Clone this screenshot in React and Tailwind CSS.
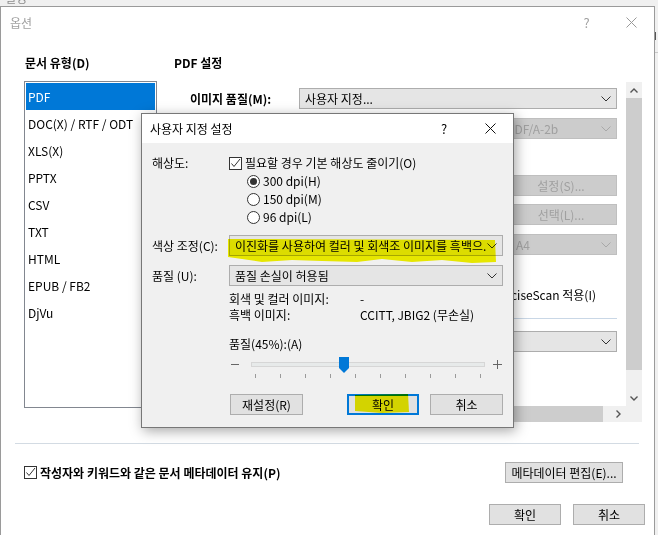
import React from 'react';

const font = "font-['Noto_Sans_CJK_KR','Noto_Sans',sans-serif]";

const Chevron = ({ color = '#333' }) => (
  <svg width="10" height="6" viewBox="0 0 10 6" fill="none" className="shrink-0">
    <path d="M0.5 0.5L5 5L9.5 0.5" stroke={color} strokeWidth="1" />
  </svg>
);

const Select = ({ value, disabled, className = '' }) => (
  <div
    className={`flex h-[21px] items-center border pl-[5px] pr-[5px] ${
      disabled ? 'border-[#bfbfbf] bg-[#cccccc] text-[#a0a0a0]' : 'border-[#adadad] bg-[#e5e5e5] text-black'
    } ${className}`}
  >
    <span className="flex-1 truncate whitespace-nowrap text-[12px] leading-[16px]">{value}</span>
    <Chevron color={disabled ? '#a8a8a8' : '#333'} />
  </div>
);

const Button = ({ children, className = '', primary, disabled }) => (
  <div
    className={`flex h-[21px] items-center justify-center text-[12px] leading-[16px] ${
      primary ? 'border-2 border-[#0078d7] bg-[#e1e1e1]' : disabled ? 'border border-[#bfbfbf] bg-[#cccccc] text-[#a0a0a0]' : 'border border-[#adadad] bg-[#e1e1e1]'
    } ${className}`}
  >
    {children}
  </div>
);

const Checkbox = () => (
  <div className="flex h-[13px] w-[13px] shrink-0 items-center justify-center border border-[#333] bg-white">
    <svg width="11" height="11" viewBox="0 0 11 11" fill="none">
      <path d="M1.5 5.5L4 8.5L10 1" stroke="#333" strokeWidth="1" />
    </svg>
  </div>
);

const Radio = ({ checked }) => (
  <div className="flex h-[13px] w-[13px] shrink-0 items-center justify-center rounded-full border border-[#333] bg-white">
    {checked && <div className="h-[7px] w-[7px] rounded-full bg-[#333]" />}
  </div>
);

const CloseX = ({ color }) => (
  <svg width="11" height="11" viewBox="0 0 11 11" fill="none">
    <path d="M0.5 0.5L10.5 10.5M10.5 0.5L0.5 10.5" stroke={color} strokeWidth="1" />
  </svg>
);

const docTypes = ['PDF', 'DOC(X) / RTF / ODT', 'XLS(X)', 'PPTX', 'CSV', 'TXT', 'HTML', 'EPUB / FB2', 'DjVu'];

const CustomDialog = () => (
  <div className="absolute left-[141px] top-[113px] flex h-[315px] w-[373px] flex-col border border-[#777] bg-[#f0f0f0] shadow-[2px_3px_12px_rgba(0,0,0,0.35)]">
    <div className="flex h-[29px] shrink-0 items-center bg-white">
      <span className="pl-[8px] text-[12px] leading-[16px]">사용자 지정 설정</span>
      <div className="ml-auto flex h-full">
        <div className="flex w-[46px] items-center justify-center text-[13px]">?</div>
        <div className="flex w-[46px] items-center justify-center">
          <CloseX color="#111" />
        </div>
      </div>
    </div>

    <div className="relative flex-1 px-[10px] text-[12px] leading-[16px]">
      <div className="mt-[11px] flex h-[18px] items-center">
        <span className="w-[77px]">해상도:</span>
        <Checkbox />
        <span className="ml-[3px]">필요할 경우 기본 해상도 줄이기(O)</span>
      </div>
      {[
        ['300 dpi(H)', true],
        ['150 dpi(M)', false],
        ['96 dpi(L)', false],
      ].map(([label, checked]) => (
        <div key={label} className="flex h-[18px] items-center pl-[95px]">
          <Radio checked={checked} />
          <span className="ml-[3px]">{label}</span>
        </div>
      ))}

      <div className="mt-[9px] flex h-[21px] items-center">
        <span className="w-[77px] shrink-0">색상 조정(C):</span>
        <Select value="이진화를 사용하여 컬러 및 회색조 이미지를 흑백으." className="flex-1" />
      </div>
      <div className="mt-[9px] flex h-[21px] items-center">
        <span className="w-[77px] shrink-0">품질 (U):</span>
        <Select value="품질 손실이 허용됨" className="flex-1" />
      </div>

      <div className="mt-[5px] flex h-[16px] pl-[77px]">
        <span className="w-[131px]">회색 및 컬러 이미지:</span>
        <span>-</span>
      </div>
      <div className="flex h-[16px] pl-[77px]">
        <span className="w-[131px]">흑백 이미지:</span>
        <span>CCITT, JBIG2 (무손실)</span>
      </div>

      <div className="mt-[13px] h-[16px] pl-[77px]">품질(45%):(A)</div>

      <div className="mt-[4px] flex h-[24px] pl-[79px]">
        <svg width="8" height="24" viewBox="0 0 8 24" className="shrink-0">
          <path d="M0 8.5H8" stroke="#666" strokeWidth="1" />
        </svg>
        <div className="relative ml-[12px] h-[24px] w-[234px]">
          <div className="absolute left-0 right-0 top-[6px] h-[5px] border border-[#d6d6d6] bg-[#e7eaea]" />
          <svg width="10" height="16" viewBox="0 0 10 16" className="absolute left-[88px] top-[1px]">
            <path d="M0 0H10V11L5 16L0 11Z" fill="#0078d7" />
          </svg>
          <div className="absolute left-[4px] right-[4px] top-[18px] flex justify-between">
            {Array.from({ length: 10 }).map((_, i) => (
              <div key={i} className="h-[4px] w-px bg-[#9a9a9a]" />
            ))}
          </div>
        </div>
        <svg width="9" height="24" viewBox="0 0 9 24" className="ml-[8px] shrink-0">
          <path d="M0 8.5H9M4.5 4V13" stroke="#666" strokeWidth="1" />
        </svg>
      </div>

      <div className="mt-[14px] flex pl-[78px]">
        <Button className="w-[73px]">재설정(R)</Button>
        <Button primary className="ml-[44px] w-[72px]">확인</Button>
        <Button className="ml-[11px] w-[73px]">취소</Button>
      </div>

      {/* highlighter marks */}
      <svg width="373" height="315" viewBox="0 0 373 315" className="pointer-events-none absolute -top-[29px] left-0 mix-blend-multiply">
        <path
          d="M86 125 L353 126 L354 148 L330 149 L300 146 L270 148 L240 145 L215 148 L180 147 L150 146 L120 148 L86 143 Z"
          fill="#f5f500"
        />
        <path d="M213 281 L266 280 L267 298 L240 299 L213 297 Z" fill="#f0f000" />
      </svg>
    </div>
  </div>
);

export default function App() {
  return (
    <div className={`relative h-[535px] w-[658px] overflow-hidden bg-[#f0f0f0] text-black ${font}`}>
      <div className="h-[6px] overflow-hidden pl-[5px]">
        <div className="-mt-[10px] text-[12px] leading-[16px] text-[#8c8c8c]">설정</div>
      </div>

      <div className="flex">
        <div className="flex h-[529px] w-[655px] shrink-0 flex-col border-x border-t border-[#9a9a9a] bg-white">
          <div className="flex h-[31px] shrink-0 items-center">
            <span className="pl-[9px] text-[12px] leading-[16px] text-[#a0a0a0]">옵션</span>
            <div className="ml-auto flex h-full">
              <div className="flex w-[45px] items-center justify-center text-[13px] text-[#a0a0a0]">?</div>
              <div className="flex w-[45px] items-center justify-center">
                <CloseX color="#999" />
              </div>
            </div>
          </div>

          <div className="mt-[17px] flex text-[12px] leading-[16px]">
            <div className="w-[156px] shrink-0 pl-[23px]">
              <div className="h-[16px] pl-[1px] font-bold">문서 유형(D)</div>
              <div className="mt-[10px] h-[327px] border border-[#828790] bg-white p-[1px]">
                {docTypes.map((t, i) => (
                  <div
                    key={t}
                    className={`flex h-[27px] items-center pl-[2px] ${i === 0 ? 'bg-[#0078d7] text-white' : ''}`}
                  >
                    {t}
                  </div>
                ))}
              </div>
            </div>

            <div className="ml-[8px] mr-[12px] flex-1">
              <div className="h-[16px] pl-[9px] font-bold">PDF 설정</div>
              <div className="mt-[11px] flex h-[340px] flex-col">
                <div className="flex h-[324px]">
                  <div className="flex flex-1 flex-col bg-white pr-[9px]">
                    <div className="mt-[6px] flex h-[21px] items-center">
                      <span className="w-[134px] shrink-0 pl-[25px] font-bold">이미지 품질(M):</span>
                      <Select value="사용자 지정..." className="flex-1" />
                    </div>
                    <div className="mt-[9px] flex justify-end">
                      <Select value="PDF/A-2b" disabled className="w-[116px]" />
                    </div>
                    <div className="mt-[36px] flex justify-end">
                      <Button disabled className="w-[112px]">설정(S)...</Button>
                    </div>
                    <div className="mt-[8px] flex justify-end">
                      <Button disabled className="w-[112px]">선택(L)...</Button>
                    </div>
                    <div className="mt-[9px] flex justify-end">
                      <Select value="A4" disabled className="w-[107px]" />
                    </div>
                    <div className="mt-[32px] flex h-[16px] justify-end pr-[21px]">PreciseScan 적용(I)</div>
                    <div className="ml-[25px] mt-[15px] h-px bg-[#c9d7e6]" />
                    <div className="mt-[12px] flex pl-[134px]">
                      <Select value="" className="flex-1" />
                    </div>
                  </div>
                  <div className="flex w-[16px] flex-col bg-[#f0f0f0]">
                    <div className="flex h-[16px] items-center justify-center">
                      <svg width="8" height="5" viewBox="0 0 8 5" fill="none">
                        <path d="M0.5 4.5L4 1L7.5 4.5" stroke="#555" strokeWidth="1.4" />
                      </svg>
                    </div>
                    <div className="h-[272px] bg-[#cdcdcd]" />
                    <div className="flex-1" />
                    <div className="flex h-[16px] items-center justify-center">
                      <svg width="8" height="5" viewBox="0 0 8 5" fill="none">
                        <path d="M0.5 0.5L4 4L7.5 0.5" stroke="#555" strokeWidth="1.4" />
                      </svg>
                    </div>
                  </div>
                </div>
                <div className="flex h-[16px] bg-[#f0f0f0]">
                  <div className="flex-1 bg-[#cdcdcd]" />
                  <div className="w-[7px]" />
                  <div className="flex w-[16px] items-center justify-center">
                    <svg width="5" height="8" viewBox="0 0 5 8" fill="none">
                      <path d="M0.5 0.5L4 4L0.5 7.5" stroke="#555" strokeWidth="1.4" />
                    </svg>
                  </div>
                  <div className="w-[16px]" />
                </div>
              </div>
            </div>
          </div>

          <div className="ml-[14px] mr-[15px] mt-[21px] h-px bg-[#d3dbe3]" />

          <div className="mt-[18px] flex h-[21px] items-center pl-[23px] pr-[31px] text-[12px] leading-[16px]">
            <Checkbox />
            <span className="ml-[3px] font-bold">작성자와 키워드와 같은 문서 메타데이터 유지(P)</span>
            <Button className="ml-auto w-[118px]">메타데이터 편집(E)...</Button>
          </div>

          <div className="mt-[21px] flex justify-end gap-[12px] pr-[9px]">
            <Button className="w-[72px]">확인</Button>
            <Button className="w-[72px]">취소</Button>
          </div>
        </div>
        <div className="flex-1 pt-[26px]">
          <div className="h-[8px] w-px bg-[#555]" />
          <div className="mt-[12px] h-px bg-[#c8c8c8]" />
        </div>
      </div>

      <CustomDialog />
    </div>
  );
}
